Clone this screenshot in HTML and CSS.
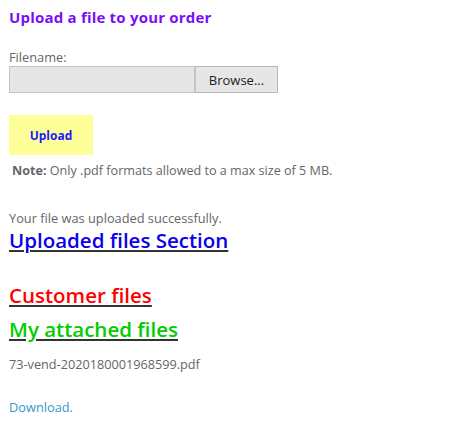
FILE: index.html
```html
<!DOCTYPE html>
<html>
<head>
<meta charset="utf-8">
<link rel="stylesheet" href="styles.css">
</head>
<body>
<div class="page">
  <h2 class="title">Upload a file to your order</h2>
  <div class="label">Filename:</div>
  <div class="file-row">
    <div class="file-input"></div>
    <div class="browse">Browse...</div>
  </div>
  <div class="upload">Upload</div>
  <div class="note"><b>Note:</b> Only .pdf formats allowed to a max size of 5 MB.</div>
  <div class="success">Your file was uploaded successfully.</div>
  <h3 class="sec sec-blue"><span>Uploaded files Section</span></h3>
  <h3 class="sec sec-red"><span>Customer files</span></h3>
  <h3 class="sec sec-green"><span>My attached files</span></h3>
  <div class="fname">73-vend-2020180001968599.pdf</div>
  <a class="download" href="#">Download.</a>
</div>
</body>
</html>
```
FILE: styles.css
```css
html, body { margin: 0; padding: 0; background: #fff; }
body { font-family: "Open Sans", "Noto Sans", sans-serif; color: #666; }
.page { padding: 0 9px; display: flex; flex-direction: column; align-items: flex-start; }
.title { margin: 7px 0 0; font-size: 15px; font-weight: 700; letter-spacing: 0.2px; color: #7a0ff5; line-height: 20px; }
.label { margin-top: 22px; font-size: 12.8px; line-height: 17px; color: #666; }
.file-row { display: flex; margin-top: 0; }
.file-input { width: 184px; height: 25px; background: #e6e6e6; border: 1px solid #c4c4c4; }
.browse { width: 81px; height: 25px; background: #e6e6e6; border: 1px solid #b8b8b8; border-left-color: #c4c4c4; font-size: 13px; color: #222; display: flex; align-items: center; justify-content: center; }
.upload { margin-top: 22px; width: 84px; height: 40px; background: #ffff99; color: #1a1aff; font-weight: 700; font-size: 12px; display: flex; align-items: center; justify-content: center; }
.note { margin-top: 7px; padding-left: 3px; font-size: 12.6px; line-height: 17px; color: #666; }
.note b { font-weight: 700; }
.success { margin-top: 31px; font-size: 12.8px; line-height: 17px; color: #666; }
.sec { margin: 0; font-size: 20.5px; font-weight: 600; line-height: 26px; text-decoration: underline; text-decoration-color: #333; text-underline-offset: 2px; }
.sec-blue { color: #0a00ee; }
.sec-red { color: #ff0000; margin-top: 29px; }
.sec-green { color: #00cc00; margin-top: 8px; }
.fname { margin-top: 14px; font-size: 12.7px; line-height: 17px; color: #666; }
.download { margin-top: 26px; font-size: 12.8px; line-height: 17px; color: #3399cc; text-decoration: none; }
```
